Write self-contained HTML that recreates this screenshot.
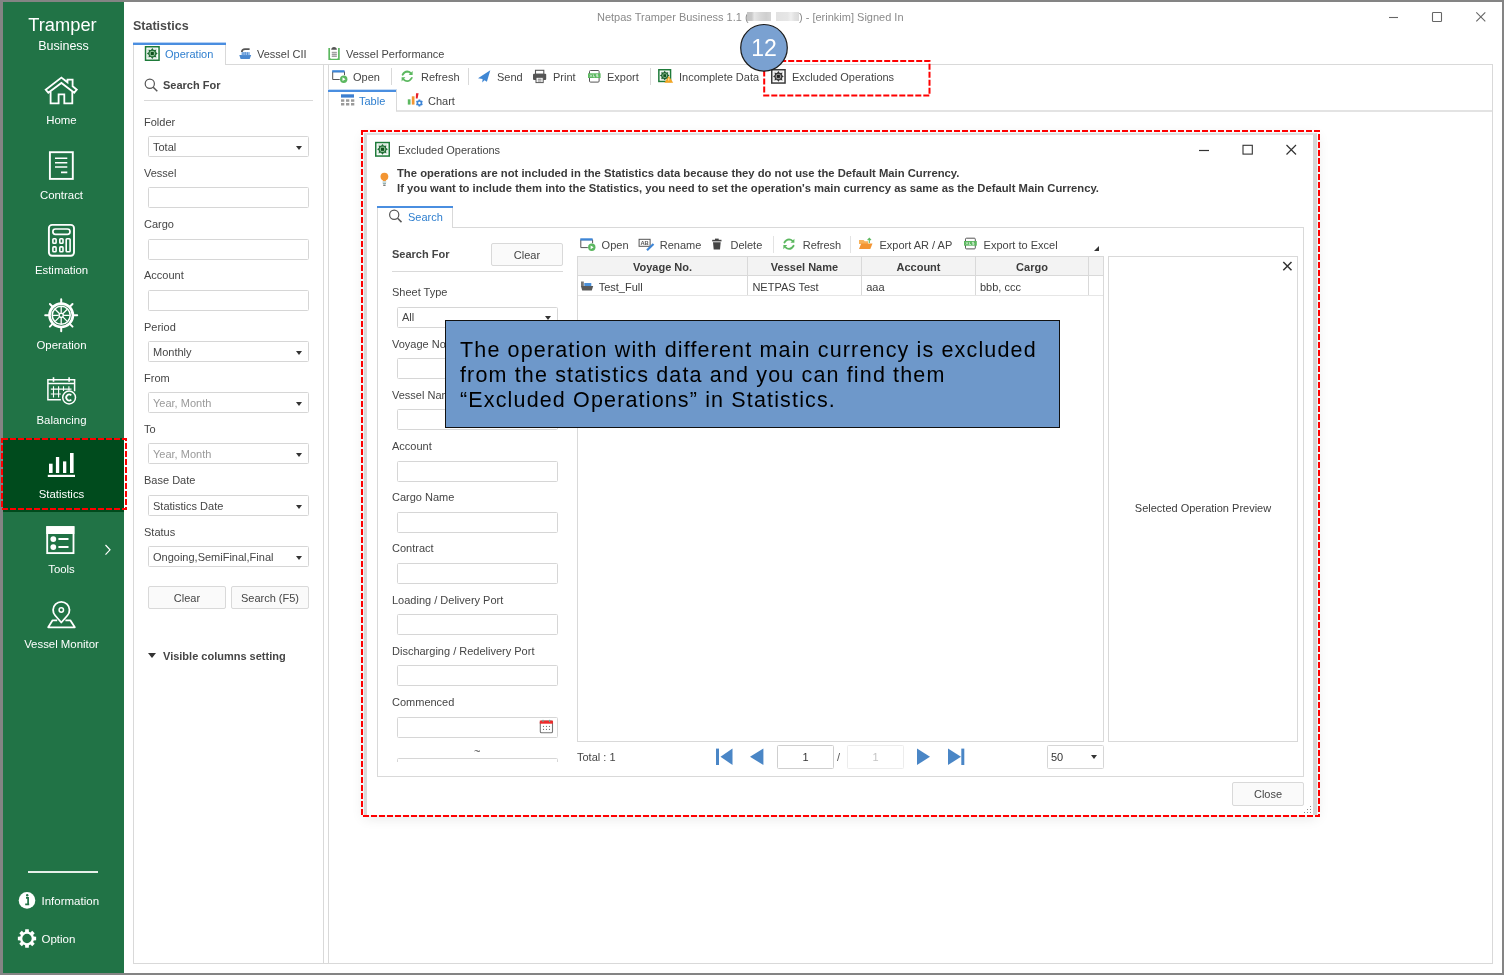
<!DOCTYPE html>
<html><head><meta charset="utf-8"><style>
*{margin:0;padding:0;box-sizing:border-box}
html,body{width:1504px;height:975px;overflow:hidden;background:#848484;font-family:"Liberation Sans",sans-serif;position:relative}
.a{position:absolute}
.t{position:absolute;white-space:nowrap;font-size:11px;line-height:14px;color:#454545}
.b{font-weight:bold}
.box{position:absolute;border:1px solid #d6d6d6;background:#fff;border-radius:1.5px}
.sb{position:absolute;color:#fff;font-size:11.4px;line-height:14px;white-space:nowrap;text-align:center;width:121px;left:1px}
.hl{position:absolute;height:1px;background:#d9d9d9}
.vl{position:absolute;width:1px;background:#d9d9d9}
svg{position:absolute;overflow:visible}
.tri{position:absolute;width:0;height:0;border-left:3.5px solid transparent;border-right:3.5px solid transparent;border-top:4px solid #333}
.btn{position:absolute;border:1px solid #d9d9d9;border-radius:2px;background:#fafafa;font-size:11px;color:#454545;text-align:center;white-space:nowrap;display:flex;align-items:center;justify-content:center}
</style></head><body><div style="position:absolute;left:0;top:0;width:1504px;height:975px;will-change:transform">
<!-- white app -->
<div class="a" style="left:3px;top:2px;width:1499px;height:971px;background:#fff"></div>

<!-- SIDEBAR -->
<div class="a" style="left:3px;top:2px;width:121px;height:971px;background:#217346"></div>
<div class="sb" style="left:2px;top:13.5px;font-size:18.3px;line-height:22px">Tramper</div>
<div class="sb" style="left:3px;top:37.5px;font-size:12.5px;line-height:16px">Business</div>
<div class="sb" style="top:113px">Home</div>
<div class="sb" style="top:188px">Contract</div>
<div class="sb" style="top:263px">Estimation</div>
<div class="sb" style="top:338px">Operation</div>
<div class="sb" style="top:413px">Balancing</div>
<div class="a" style="left:3px;top:438px;width:121px;height:74px;background:#004b1d"></div>
<div class="sb" style="top:487px">Statistics</div>
<div class="sb" style="top:562px">Tools</div>
<div class="sb" style="top:637px">Vessel Monitor</div>
<div class="a" style="left:28px;top:871px;width:70px;height:1.5px;background:#e6efe9"></div>
<svg width="130" height="975" style="left:0;top:0" fill="none" stroke="#fff" stroke-width="1.8">
<!-- home -->
<path d="M45.7,89.7 L61.4,77.6 L67.5,82.3 L67.5,79.6 L72.6,79.6 L72.6,86.3 L76.8,89.7 L74.2,92.8 L61.4,83 L48.3,92.8 Z" stroke-linejoin="miter"/>
<path d="M50.6,91.5 V103.4 H58.6 V94.3 H64.3 V103.4 H72.3 V91.5"/>
<!-- contract -->
<rect x="49.9" y="152.2" width="22.9" height="26.7" stroke-width="1.9"/>
<path d="M55,158.2 H67.3 M55,162.8 H67.3 M55,167 H67.3 M61,172.4 H67.3" stroke-width="1.6"/>
<!-- estimation -->
<rect x="48.9" y="224.9" width="25.1" height="30.9" rx="3.2" stroke-width="1.9"/>
<rect x="52.9" y="229" width="17.1" height="5.3" rx="2.5" stroke-width="1.7"/>
<rect x="52.9" y="238.7" width="3.2" height="4.6" rx="0.8" stroke-width="1.6"/>
<rect x="59.8" y="238.7" width="3.2" height="4.6" rx="0.8" stroke-width="1.6"/>
<rect x="52.9" y="246.9" width="3.2" height="4.9" rx="0.8" stroke-width="1.6"/>
<rect x="59.8" y="246.9" width="3.2" height="4.9" rx="0.8" stroke-width="1.6"/>
<rect x="66.2" y="238.7" width="3.9" height="13.1" rx="0.8" stroke-width="1.6"/>
<!-- operation wheel -->
<circle cx="61.2" cy="315.3" r="11.7" stroke-width="2.6"/>
<circle cx="61.2" cy="315.3" r="9" stroke-width="1.5"/>
<circle cx="61.2" cy="315.3" r="2.1" stroke-width="1.4"/>
<path d="M61.20,312.70 L61.20,306.70 M63.04,313.46 L67.28,309.22 M63.80,315.30 L69.80,315.30 M63.04,317.14 L67.28,321.38 M61.20,317.90 L61.20,323.90 M59.36,317.14 L55.12,321.38 M58.60,315.30 L52.60,315.30 M59.36,313.46 L55.12,309.22" stroke-width="1.3"/>
<path d="M61.20,303 L61.20,299.3 M70.04,306.46 L72.51,303.99 M73.50,315.30 L77.20,315.30 M70.04,324.14 L72.51,326.61 M61.20,327.6 L61.20,331.30 M52.36,324.14 L49.89,326.61 M48.90,315.30 L45.20,315.30 M52.36,306.46 L49.89,303.99" stroke-width="2" stroke-linecap="round"/>
<!-- balancing -->
<path d="M74.6,391.3 V379.8 H47.9 V399.8 H60.9 M47.9,383.5 H74.6" stroke-width="1.5"/>
<path d="M53.5,377.2 V381.7 M69.1,377.2 V381.7" stroke-width="1.6"/>
<path d="M53.5,386.2 V397.5 M58.6,386.2 V397.5 M63.5,386.2 V391 M68.9,386.2 V390 M50.8,389.1 H71.5 M50.8,394 H60.9" stroke-width="1.1"/>
<circle cx="69.1" cy="397.5" r="6.4" stroke-width="1.5"/>
<path d="M71.3,395.3 A3,3 0 1 0 71.3,399.7" stroke-width="1.8"/>
<!-- statistics -->
<g fill="#fff" stroke="none">
<rect x="49" y="463.7" width="3.6" height="9.3"/>
<rect x="55.9" y="457" width="3.3" height="16"/>
<rect x="63" y="461.4" width="3.3" height="11.6"/>
<rect x="70" y="453" width="3.6" height="20"/>
<rect x="47.8" y="474.8" width="27.2" height="2.2"/>
</g>
<!-- tools -->
<rect x="47.2" y="527.1" width="26.3" height="26" stroke-width="1.85"/>
<rect x="46.3" y="526.2" width="28.1" height="7.8" fill="#fff" stroke="none"/>
<circle cx="53.3" cy="539.1" r="2.9" fill="#fff" stroke="none"/>
<circle cx="53.3" cy="547.1" r="2.9" fill="#fff" stroke="none"/>
<path d="M58.4,539.1 H68.5 M58.4,547.1 H68.5" stroke-width="2"/>
<path d="M105.5,545 L110,549.8 L105.5,554.6" stroke-width="1.2"/>
<!-- vessel monitor -->
<path d="M61.3,622.5 L55.2,615.5 A8.2,8.2 0 1 1 67.4,615.5 Z" stroke-width="1.8" stroke-linejoin="round"/>
<circle cx="61.3" cy="610" r="2.2" stroke-width="1.5"/>
<path d="M57.2,620.3 H52.6 L48.2,627.3 H74.8 L70.3,620.3 H65.4" stroke-width="1.8" stroke-linejoin="round"/>
<!-- info -->
<circle cx="27" cy="900.4" r="8.3" fill="#fff" stroke="none"/>
<path d="M26,897.8 H28.1 V904.3 M25.2,904.4 H29.2" stroke="#217346" stroke-width="1.7"/>
<circle cx="27.2" cy="895.3" r="1.2" fill="#217346" stroke="none"/>
<!-- option gear -->
<path fill="#fff" stroke="none" fill-rule="evenodd" d="M25.07,931.77 L25.23,929.37 L28.77,929.37 L28.93,931.77 L30.39,932.38 L32.20,930.79 L34.71,933.30 L33.12,935.11 L33.73,936.57 L36.13,936.73 L36.13,940.27 L33.73,940.43 L33.12,941.89 L34.71,943.70 L32.20,946.21 L30.39,944.62 L28.93,945.23 L28.77,947.63 L25.23,947.63 L25.07,945.23 L23.61,944.62 L21.80,946.21 L19.29,943.70 L20.88,941.89 L20.27,940.43 L17.87,940.27 L17.87,936.73 L20.27,936.57 L20.88,935.11 L19.29,933.30 L21.80,930.79 L23.61,932.38 Z M27,933.8 A4.7,4.7 0 1 0 27,943.2 A4.7,4.7 0 1 0 27,933.8 Z"/>
</svg>
<div class="t" style="left:41.5px;top:894px;color:#fff;font-size:11.5px">Information</div>
<div class="t" style="left:41.5px;top:932px;color:#fff;font-size:11.5px">Option</div>

<!-- TITLE -->
<div class="t" style="left:597px;top:10px;color:#8a8a8a">Netpas Tramper Business 1.1 (</div>
<div class="a" style="left:747px;top:12px;width:24px;height:9px;background:linear-gradient(90deg,#c4c4c4 0,#c9c9c9 20%,#e6e6e6 30%,#d8d8d8 55%,#cfcfcf 80%,#d6d6d6 100%)"></div>
<div class="a" style="left:776px;top:12px;width:23px;height:9px;background:linear-gradient(90deg,#e2e2e2 0,#e6e6e6 50%,#efefef 65%,#e2e2e2 80%,#dadada 100%)"></div>
<div class="t" style="left:799px;top:10px;color:#8a8a8a">) - [erinkim] Signed In</div>
<svg width="1" height="1" style="left:0;top:0" fill="none" stroke="#666" stroke-width="1.1">
<path d="M1389,17.5 H1398"/>
<rect x="1432.5" y="12.5" width="9" height="9" rx="0.8"/>
<path d="M1476.3,12.3 L1485.3,21.3 M1485.3,12.3 L1476.3,21.3" stroke-width="1.1"/>
</svg>
<div class="t b" style="left:133px;top:18px;font-size:12.5px;line-height:16px;color:#4a4a4a">Statistics</div>

<!-- MAIN TABS -->
<div class="hl" style="left:225px;top:64px;width:1268px"></div>
<div class="a" style="left:133px;top:42px;width:93px;height:23px;border:1px solid #d9d9d9;border-top:none;border-bottom:none;background:#fff"></div>
<div class="a" style="left:133px;top:42px;width:93px;height:3px;background:linear-gradient(#b5d0f3 0,#b5d0f3 1px,#4a8ee0 1px)"></div>
<div class="t" style="left:165px;top:47px;color:#2f7fcf">Operation</div>
<div class="t" style="left:257px;top:47px">Vessel CII</div>
<div class="t" style="left:346px;top:47px">Vessel Performance</div>

<!-- LEFT PANEL -->
<div class="vl" style="left:133px;top:64px;height:900px"></div>
<div class="vl" style="left:323px;top:64px;height:900px"></div>
<div class="hl" style="left:133px;top:963px;width:1360px"></div>
<div class="t b" style="left:163px;top:78px">Search For</div>
<div class="hl" style="left:144px;top:100px;width:169px"></div>

<!-- RIGHT PANEL -->
<div class="vl" style="left:328px;top:64px;height:900px"></div>
<div class="vl" style="left:1492px;top:64px;height:900px"></div>
<div class="hl" style="left:328px;top:963px;width:1165px"></div>
<div class="hl" style="left:396px;top:110px;width:1096px;height:2px;background:#e3e3e3"></div>
<div class="a" style="left:328px;top:89px;width:69px;height:3px;background:linear-gradient(#c5dbf5 0,#c5dbf5 1px,#4a8ee0 1px)"></div>
<div class="vl" style="left:396px;top:90px;height:21px"></div>
<div class="t" style="left:359px;top:94px;color:#2f7fcf">Table</div>
<div class="t" style="left:428px;top:94px">Chart</div>

<div class="t" style="left:353px;top:70px">Open</div>
<div class="t" style="left:421px;top:70px">Refresh</div>
<div class="t" style="left:497px;top:70px">Send</div>
<div class="t" style="left:553px;top:70px">Print</div>
<div class="t" style="left:607px;top:70px">Export</div>
<div class="t" style="left:679px;top:70px">Incomplete Data</div>
<div class="t" style="left:792px;top:70px">Excluded Operations</div>
<div class="vl" style="left:391px;top:68px;height:17px"></div>
<div class="vl" style="left:468px;top:68px;height:17px"></div>
<div class="vl" style="left:650px;top:68px;height:17px"></div>

<div class="t" style="left:144px;top:114.5px">Folder</div>
<div class="box" style="left:148px;top:136px;width:161px;height:21px"></div>
<div class="t" style="left:153px;top:140px">Total</div>
<div class="tri" style="left:296px;top:146px"></div>
<div class="t" style="left:144px;top:165.8px">Vessel</div>
<div class="box" style="left:148px;top:187px;width:161px;height:21px"></div>
<div class="t" style="left:144px;top:217.0px">Cargo</div>
<div class="box" style="left:148px;top:239px;width:161px;height:21px"></div>
<div class="t" style="left:144px;top:268.2px">Account</div>
<div class="box" style="left:148px;top:290px;width:161px;height:21px"></div>
<div class="t" style="left:144px;top:319.5px">Period</div>
<div class="box" style="left:148px;top:341px;width:161px;height:21px"></div>
<div class="t" style="left:153px;top:345px">Monthly</div>
<div class="tri" style="left:296px;top:351px"></div>
<div class="t" style="left:144px;top:370.8px">From</div>
<div class="box" style="left:148px;top:392px;width:161px;height:21px"></div>
<div class="t" style="left:153px;top:396px;color:#9a9a9a">Year, Month</div>
<div class="tri" style="left:296px;top:402px"></div>
<div class="t" style="left:144px;top:422.0px">To</div>
<div class="box" style="left:148px;top:443px;width:161px;height:21px"></div>
<div class="t" style="left:153px;top:447px;color:#9a9a9a">Year, Month</div>
<div class="tri" style="left:296px;top:453px"></div>
<div class="t" style="left:144px;top:473.2px">Base Date</div>
<div class="box" style="left:148px;top:495px;width:161px;height:21px"></div>
<div class="t" style="left:153px;top:499px">Statistics Date</div>
<div class="tri" style="left:296px;top:505px"></div>
<div class="t" style="left:144px;top:524.5px">Status</div>
<div class="box" style="left:148px;top:546px;width:161px;height:21px"></div>
<div class="t" style="left:153px;top:550px">Ongoing,SemiFinal,Final</div>
<div class="tri" style="left:296px;top:556px"></div>
<div class="btn" style="left:148px;top:586px;width:78px;height:23px">Clear</div>
<div class="btn" style="left:231px;top:586px;width:78px;height:23px">Search (F5)</div>
<div class="a" style="left:148px;top:653px;width:0;height:0;border-left:4px solid transparent;border-right:4px solid transparent;border-top:5px solid #333"></div>
<div class="t b" style="left:163px;top:649px">Visible columns setting</div>
<!--LEFTFORM-->
<!-- dialog frame -->
<div class="a" style="left:364px;top:133px;width:953px;height:682px;background:#fff;border-left:3px solid #dadada;border-right:4px solid #d6d6d6;border-top:2px solid #e0e0e0;box-shadow:0 3px 12px rgba(0,0,0,0.10)"></div>
<div class="t" style="left:398px;top:143px;color:#454545">Excluded Operations</div>
<svg width="1" height="1" style="left:0;top:0" fill="none" stroke="#333" stroke-width="1.2">
<path d="M1199,150.5 H1209"/>
<rect x="1243" y="145.3" width="9.3" height="8.8" stroke-width="1.1"/>
<path d="M1286.5,145 L1296,154.5 M1296,145 L1286.5,154.5" stroke-width="1.2"/>
</svg>
<div class="t b" style="left:397px;top:166px;color:#3a3a3a;font-size:11.25px">The operations are not included in the Statistics data because they do not use the Default Main Currency.</div>
<div class="t b" style="left:397px;top:181px;color:#3a3a3a;font-size:11.25px">If you want to include them into the Statistics, you need to set the operation's main currency as same as the Default Main Currency.</div>
<div class="a" style="left:377px;top:227px;width:927px;height:550px;border:1px solid #d9d9d9;background:#fff"></div>
<div class="a" style="left:377px;top:206px;width:76px;height:22px;border:1px solid #d9d9d9;border-bottom:none;background:#fff"></div>
<div class="a" style="left:377px;top:206px;width:76px;height:2px;background:#4a8ee0"></div>
<div class="t" style="left:408px;top:210px;color:#2f7fcf">Search</div>
<div class="t b" style="left:392px;top:247px">Search For</div>
<div class="btn" style="left:491px;top:243px;width:72px;height:23px">Clear</div>
<div class="hl" style="left:392px;top:271px;width:171px"></div>
<div class="a" style="left:378px;top:272px;width:198px;height:490px;overflow:hidden">
<div class="t" style="left:14px;top:13.4px">Sheet Type</div>
<div class="box" style="left:19px;top:35px;width:161px;height:21px"></div>
<div class="t" style="left:24px;top:38px">All</div>
<div class="tri" style="left:167px;top:44px"></div>
<div class="t" style="left:14px;top:64.6px">Voyage No.</div>
<div class="box" style="left:19px;top:86px;width:161px;height:21px"></div>
<div class="t" style="left:14px;top:115.8px">Vessel Name</div>
<div class="box" style="left:19px;top:137px;width:161px;height:21px"></div>
<div class="t" style="left:14px;top:167.0px">Account</div>
<div class="box" style="left:19px;top:189px;width:161px;height:21px"></div>
<div class="t" style="left:14px;top:218.2px">Cargo Name</div>
<div class="box" style="left:19px;top:240px;width:161px;height:21px"></div>
<div class="t" style="left:14px;top:269.4px">Contract</div>
<div class="box" style="left:19px;top:291px;width:161px;height:21px"></div>
<div class="t" style="left:14px;top:320.6px">Loading / Delivery Port</div>
<div class="box" style="left:19px;top:342px;width:161px;height:21px"></div>
<div class="t" style="left:14px;top:371.8px">Discharging / Redelivery Port</div>
<div class="box" style="left:19px;top:393px;width:161px;height:21px"></div>
<div class="t" style="left:14px;top:423.0px">Commenced</div>
<div class="box" style="left:19px;top:445px;width:161px;height:21px"></div>
<div class="t" style="left:96px;top:472px;font-size:11px">~</div>
<div class="box" style="left:19px;top:486px;width:161px;height:21px"></div>
</div>
<div class="t" style="left:601.6px;top:238px">Open</div>
<div class="t" style="left:659.8px;top:238px">Rename</div>
<div class="t" style="left:730.5px;top:238px">Delete</div>
<div class="t" style="left:802.7px;top:238px">Refresh</div>
<div class="t" style="left:879.5px;top:238px">Export AR / AP</div>
<div class="t" style="left:983.6px;top:238px">Export to Excel</div>
<div class="vl" style="left:773px;top:236px;height:17px;background:#e3e3e3"></div>
<div class="vl" style="left:850px;top:236px;height:17px;background:#e3e3e3"></div>
<div class="a" style="left:1094px;top:246px;width:0;height:0;border-left:5px solid transparent;border-bottom:5px solid #333"></div>
<div class="a" style="left:577px;top:256px;width:527px;height:486px;border:1px solid #d9d9d9;background:#fff"></div>
<div class="a" style="left:578px;top:257px;width:525px;height:19px;background:#f3f3f3;border-bottom:1px solid #d9d9d9"></div>
<div class="vl" style="left:747px;top:257px;height:38px"></div>
<div class="vl" style="left:861px;top:257px;height:38px"></div>
<div class="vl" style="left:975px;top:257px;height:38px"></div>
<div class="vl" style="left:1088px;top:257px;height:38px"></div>
<div class="hl" style="left:578px;top:295px;width:525px;background:#e6e6e6"></div>
<div class="t b" style="left:578px;width:169px;text-align:center;top:260px;color:#3c3c3c">Voyage No.</div>
<div class="t b" style="left:748px;width:113px;text-align:center;top:260px;color:#3c3c3c">Vessel Name</div>
<div class="t b" style="left:862px;width:113px;text-align:center;top:260px;color:#3c3c3c">Account</div>
<div class="t b" style="left:976px;width:112px;text-align:center;top:260px;color:#3c3c3c">Cargo</div>
<div class="t" style="left:598.7px;top:280px;color:#3c3c3c">Test_Full</div>
<div class="t" style="left:752.4px;top:280px;color:#3c3c3c">NETPAS Test</div>
<div class="t" style="left:866.2px;top:280px;color:#3c3c3c">aaa</div>
<div class="t" style="left:980px;top:280px;color:#3c3c3c">bbb, ccc</div>
<div class="a" style="left:1108px;top:256px;width:190px;height:486px;border:1px solid #d9d9d9;background:#fff"></div>
<svg width="1" height="1" style="left:0;top:0" fill="none" stroke="#333" stroke-width="1.5"><path d="M1283.3,262 L1291.5,270.2 M1291.5,262 L1283.3,270.2"/></svg>
<div class="t" style="left:1108px;width:190px;text-align:center;top:501px;color:#3c3c3c">Selected Operation Preview</div>
<div class="t" style="left:577px;top:750px;color:#454545">Total : 1</div>
<svg width="1" height="1" style="left:0;top:0" fill="#4a86c6" stroke="none">
<rect x="716" y="748.6" width="3" height="16.4"/><path d="M732.5,748.6 V765 L720.5,756.8 Z"/>
<path d="M763.4,748.6 V765 L750,756.8 Z"/>
<path d="M917,748.6 V765 L930,756.8 Z"/>
<path d="M948,748.6 V765 L961,756.8 Z"/><rect x="961.3" y="748.6" width="3" height="16.4"/>
</svg>
<div class="box" style="left:777px;top:745px;width:57px;height:24px;border-color:#cfcfcf"></div>
<div class="t" style="left:777px;width:57px;text-align:center;top:750px;color:#333">1</div>
<div class="t" style="left:837px;top:750px;color:#555">/</div>
<div class="box" style="left:847px;top:745px;width:57px;height:24px;border-color:#ececec"></div>
<div class="t" style="left:847px;width:57px;text-align:center;top:750px;color:#c4c4c4">1</div>
<div class="box" style="left:1047px;top:745px;width:57px;height:24px"></div>
<div class="t" style="left:1051px;top:750px;color:#333">50</div>
<div class="tri" style="left:1091px;top:755px"></div>
<div class="btn" style="left:1232px;top:782px;width:72px;height:24px">Close</div>
<!--DIALOG-->
<!--ICONS-->
<svg width="1504" height="975" style="left:0;top:0" fill="none">
<rect x="145.55" y="46.75" width="13.5" height="13.5" stroke="#1e7b3a" stroke-width="1.5" fill="#fff"/>
<rect x="147.8" y="49" width="9" height="9" stroke="#1e7b3a" stroke-width="0.5" opacity="0.35"/>
<path d="M152.30,48.10 L153.75,50.01 L156.12,49.68 L155.79,52.05 L157.70,53.50 L155.79,54.95 L156.12,57.32 L153.75,56.99 L152.30,58.90 L150.85,56.99 L148.48,57.32 L148.81,54.95 L146.90,53.50 L148.81,52.05 L148.48,49.68 L150.85,50.01 Z" fill="#1e6b33"/>
<circle cx="152.3" cy="53.5" r="2.808" fill="#8fbf95"/>
<rect x="150.8" y="52.0" width="3.0" height="3.0" fill="#0d4f1c"/>
<rect x="375.75" y="142.55" width="13.5" height="13.5" stroke="#1e7b3a" stroke-width="1.5" fill="#fff"/>
<rect x="378" y="144.8" width="9" height="9" stroke="#1e7b3a" stroke-width="0.5" opacity="0.35"/>
<path d="M382.50,143.90 L383.95,145.81 L386.32,145.48 L385.99,147.85 L387.90,149.30 L385.99,150.75 L386.32,153.12 L383.95,152.79 L382.50,154.70 L381.05,152.79 L378.68,153.12 L379.01,150.75 L377.10,149.30 L379.01,147.85 L378.68,145.48 L381.05,145.81 Z" fill="#1e6b33"/>
<circle cx="382.5" cy="149.3" r="2.808" fill="#8fbf95"/>
<rect x="381.0" y="147.8" width="3.0" height="3.0" fill="#0d4f1c"/>
<rect x="771.75" y="69.75" width="13.3" height="13.3" stroke="#3a3a3a" stroke-width="1.5" fill="#fff"/>
<rect x="774" y="72" width="8.8" height="8.8" stroke="#3a3a3a" stroke-width="0.5" opacity="0.35"/>
<path d="M778.40,71.07 L779.83,72.95 L782.17,72.63 L781.85,74.97 L783.73,76.40 L781.85,77.83 L782.17,80.17 L779.83,79.85 L778.40,81.73 L776.97,79.85 L774.63,80.17 L774.95,77.83 L773.07,76.40 L774.95,74.97 L774.63,72.63 L776.97,72.95 Z" fill="#333"/>
<circle cx="778.4" cy="76.4" r="2.77056" fill="#9a9a9a"/>
<rect x="776.92" y="74.92" width="2.9600000000000004" height="2.9600000000000004" fill="#222"/>
<rect x="658.85" y="69.75" width="11.7" height="11.7" stroke="#1e7b3a" stroke-width="1.5" fill="#fff"/>
<rect x="661.1" y="72" width="7.199999999999999" height="7.199999999999999" stroke="#1e7b3a" stroke-width="0.5" opacity="0.35"/>
<path d="M664.70,70.85 L665.97,72.53 L668.06,72.24 L667.77,74.33 L669.45,75.60 L667.77,76.87 L668.06,78.96 L665.97,78.67 L664.70,80.35 L663.43,78.67 L661.34,78.96 L661.63,76.87 L659.95,75.60 L661.63,74.33 L661.34,72.24 L663.43,72.53 Z" fill="#1a5e2c"/>
<circle cx="664.7" cy="75.6" r="2.47104" fill="#8fbf95"/>
<rect x="663.38" y="74.28" width="2.64" height="2.64" fill="#0d4f1c"/>
<path d="M668.8,76 L673.2,82.8 H664.4 Z" fill="#f5a623"/>
<path d="M668.8,78.3 V80.6" stroke="#fff" stroke-width="0.8"/>
<path d="M239.3,55.1 H251.2 L249.7,59 H240.6 Z" fill="#4a88d0"/>
<rect x="241.4" y="52.1" width="8.6" height="3" fill="#9cc0ea"/>
<path d="M243,52.3 V55 M245.2,52 V55 M247.6,52.3 V55" stroke="#4a88d0" stroke-width="0.9"/>
<path d="M241.8,52 Q242,49.3 245,49.2 H249.6" stroke="#555" stroke-width="1.7"/>
<path d="M329.2,48 V59.1 H338.9 V48" stroke="#5cb860" stroke-width="1.7"/>
<rect x="330.7" y="48.5" width="6.7" height="10.2" fill="#fff"/>
<path d="M331.2,49.8 Q331.5,47 334,47 Q336.6,47 336.9,49.8 Z" fill="#555"/>
<rect x="331.8" y="51.8" width="5" height="5.2" fill="#cfcfcf"/>
<path d="M331.8,52.4 H336.8 M331.8,54.5 H336.8 M331.8,56.4 H336.8" stroke="#8f8f8f" stroke-width="0.8"/>
<circle cx="149.8" cy="83.8" r="4.6" stroke="#555" stroke-width="1.2"/><path d="M153.2,87.2 L157.3,91.2" stroke="#555" stroke-width="1.5"/>
<circle cx="394.2" cy="214.8" r="4.6" stroke="#555" stroke-width="1.2"/><path d="M397.6,218.2 L401.5,222.1" stroke="#555" stroke-width="1.5"/>
<path d="M344.5,75.2 V71.7 H332.7 V79.5 H339.7" stroke="#555" stroke-width="1"/>
<rect x="332.2" y="70.2" width="12.3" height="2.2" fill="#3d85d6"/>
<circle cx="343.7" cy="79.2" r="3.7" fill="#5cb860"/>
<path d="M342.5,77.3 L345.5,79.2 L342.5,81.10000000000001 Z" fill="#fff"/>
<path d="M592.5999999999999,243.3 V239.8 H580.8 V247.60000000000002 H587.8" stroke="#555" stroke-width="1"/>
<rect x="580.3" y="238.3" width="12.3" height="2.2" fill="#3d85d6"/>
<circle cx="591.8" cy="247.3" r="3.7" fill="#5cb860"/>
<path d="M590.5999999999999,245.4 L593.5999999999999,247.3 L590.5999999999999,249.20000000000002 Z" fill="#fff"/>
<path d="M402.59999999999997,74.7 Q404.4,71.5 407.2,71.5 Q409.2,71.6 410.59999999999997,73.0" stroke="#5cb860" stroke-width="1.8" stroke-linecap="round"/>
<path d="M412.59999999999997,71.0 V75.0 H408.7 Z" fill="#5cb860"/>
<path d="M411.8,77.89999999999999 Q410.0,81.1 407.2,81.1 Q405.2,81.0 403.8,79.6" stroke="#5cb860" stroke-width="1.8" stroke-linecap="round"/>
<path d="M401.59999999999997,81.5 V77.3 H405.4 Z" fill="#5cb860"/>
<path d="M784.4,242.5 Q786.2,239.29999999999998 789,239.29999999999998 Q791,239.4 792.4,240.79999999999998" stroke="#5cb860" stroke-width="1.8" stroke-linecap="round"/>
<path d="M794.4,238.79999999999998 V242.79999999999998 H790.5 Z" fill="#5cb860"/>
<path d="M793.6,245.7 Q791.8,248.9 789,248.9 Q787,248.79999999999998 785.6,247.4" stroke="#5cb860" stroke-width="1.8" stroke-linecap="round"/>
<path d="M783.4,249.29999999999998 V245.1 H787.2 Z" fill="#5cb860"/>
<path d="M490.3,70.2 L478,78.3 L482.6,79 L482.2,82.5 L484.5,80.3 L486.9,81.7 Z" fill="#3f87d4"/>
<rect x="535.5" y="70.3" width="8.3" height="4" stroke="#555" stroke-width="1.1" fill="#fff"/>
<rect x="533" y="73.8" width="13.2" height="6.2" rx="1" fill="#555"/>
<rect x="536" y="77.3" width="7.2" height="5.3" stroke="#555" stroke-width="1" fill="#fff"/>
<path d="M537.8,79.2 H541.5 M537.8,81 H541.5" stroke="#555" stroke-width="0.8"/>
<rect x="589.5" y="70.5" width="9.6" height="11.6" rx="1" stroke="#555" stroke-width="1" fill="#fff"/>
<rect x="588" y="73.3" width="12.6" height="4.7" fill="#5cb860"/>
<path d="M590,74.5 L592,76.8 M592,74.5 L590,76.8 M593.5,74.5 V76.8 H595 M598,74.6 H596.3 V75.6 H598 V76.7 H596.3" stroke="#fff" stroke-width="0.6"/>
<rect x="965.5" y="238.2" width="9.8" height="10.7" rx="1" stroke="#555" stroke-width="1" fill="#fff"/>
<rect x="964" y="241.0" width="12.8" height="4.7" fill="#5cb860"/>
<path d="M966,242.2 L968,244.5 M968,242.2 L966,244.5 M969.5,242.2 V244.5 H971 M974,242.29999999999998 H972.3 V243.29999999999998 H974 V244.39999999999998 H972.3" stroke="#fff" stroke-width="0.6"/>
<rect x="341" y="94.3" width="13" height="3.3" fill="#3d7fd0"/>
<rect x="341" y="99.3" width="3.3" height="2.5" fill="#9a9a9a"/>
<rect x="346" y="99.3" width="3.3" height="2.5" fill="#9a9a9a"/>
<rect x="351" y="99.3" width="3.3" height="2.5" fill="#9a9a9a"/>
<rect x="341" y="103" width="3.3" height="2.5" fill="#9a9a9a"/>
<rect x="346" y="103" width="3.3" height="2.5" fill="#9a9a9a"/>
<rect x="351" y="103" width="3.3" height="2.5" fill="#9a9a9a"/>
<rect x="407.8" y="99.3" width="2.7" height="5.3" fill="#5cb860"/>
<rect x="411.8" y="96.3" width="2.7" height="8.3" fill="#f39532"/>
<path d="M416,93.3 H418.6 L417.6,98.6 H415.8 Z" fill="#e8202a"/>
<path d="M418.39,100.50 L418.47,99.52 L420.33,99.52 L420.41,100.50 L421.06,100.87 L421.95,100.45 L422.88,102.07 L422.07,102.62 L422.07,103.38 L422.88,103.93 L421.95,105.55 L421.06,105.13 L420.41,105.50 L420.33,106.48 L418.47,106.48 L418.39,105.50 L417.74,105.13 L416.85,105.55 L415.92,103.93 L416.73,103.38 L416.73,102.62 L415.92,102.07 L416.85,100.45 L417.74,100.87 Z M418.20,103.00 A1.2,1.2 0 1 0 420.60,103.00 A1.2,1.2 0 1 0 418.20,103.00 Z" fill="#3d85d6" fill-rule="evenodd"/>
<circle cx="384.4" cy="176.6" r="3.9" fill="#f39532"/>
<path d="M382.3,178 L383,181 H385.8 L386.5,178 Z" fill="#f39532"/>
<path d="M382.6,182 H386.2 M382.8,183.5 H386" stroke="#8aa" stroke-width="0.9"/><path d="M383.2,185.2 H385.6" stroke="#444" stroke-width="1"/>
<rect x="639.1" y="239.3" width="11" height="7" stroke="#555" stroke-width="1" fill="#fff"/>
<text x="644.6" y="245.4" font-size="5.8" font-weight="bold" text-anchor="middle" fill="#555" font-family="Liberation Sans">AB</text>
<path d="M653.5,244 L647,250.3" stroke="#3d85d6" stroke-width="2.2"/>
<rect x="712.2" y="239.8" width="9.3" height="1.6" fill="#444"/><rect x="715" y="238.6" width="3.7" height="1.4" fill="#444"/>
<path d="M713,242.2 H720.7 L720,249.4 H713.7 Z" fill="#444"/>
<path d="M859,240 H863.5 L864.8,241.3 H868 V244 H859 Z" fill="#f7b25a"/>
<path d="M859,248.9 L861.2,243.6 H872.5 L870.3,248.9 Z" fill="#f39532"/>
<path d="M869.3,243 V238.6 M867.6,240.2 L869.3,238.3 L871,240.2" stroke="#5cb860" stroke-width="1.1"/>
<path d="M580.9,286 H593.2 L591.8,290.6 H582.2 Z" fill="#5a5a5a"/>
<rect x="581" y="281.5" width="2.8" height="4.5" fill="#777"/>
<rect x="584.3" y="283" width="7" height="3" fill="#4a8fd8"/>
<rect x="540.3" y="721" width="12.2" height="11.8" rx="1.3" stroke="#777" stroke-width="1.1" fill="#fff"/>
<rect x="539.8" y="720.6" width="13.1" height="3.1" fill="#ed2b2b"/>
<path d="M543,719.8 V722 M549.6,719.8 V722" stroke="#6a9" stroke-width="1"/>
<circle cx="543.5" cy="726.4" r="0.6" fill="#777"/>
<circle cx="546.5" cy="726.4" r="0.6" fill="#777"/>
<circle cx="549.5" cy="726.4" r="0.6" fill="#777"/>
<circle cx="543.5" cy="729.4" r="0.6" fill="#777"/>
<circle cx="546.5" cy="729.4" r="0.6" fill="#777"/>
<circle cx="549.5" cy="729.4" r="0.6" fill="#777"/>
<rect x="1310" y="806" width="1" height="1" fill="#888"/>
<rect x="1310" y="809" width="1" height="1" fill="#888"/>
<rect x="1307" y="809" width="1" height="1" fill="#888"/>
<rect x="1310" y="812" width="1" height="1" fill="#888"/>
<rect x="1307" y="812" width="1" height="1" fill="#888"/>
<rect x="1304" y="812" width="1" height="1" fill="#888"/>
</svg>
<!--/ICONS-->
<svg width="1504" height="975" style="left:0;top:0" fill="none">
<rect x="2" y="439" width="124" height="70" stroke="#f00" stroke-width="2" stroke-dasharray="6 2"/>
<rect x="764.2" y="61" width="165.3" height="34.5" stroke="#f00" stroke-width="2" stroke-dasharray="6 2"/>
<rect x="362" y="131" width="957" height="685" stroke="#f00" stroke-width="2" stroke-dasharray="6 2"/>
<circle cx="764" cy="47.8" r="23.3" fill="#7aa1d1" stroke="#1c1c1c" stroke-width="1.2"/>
</svg>
<div class="a" style="left:740px;top:35px;width:48px;text-align:center;font-size:23px;line-height:27px;color:#fff">12</div>
<div class="a" style="left:445px;top:320px;width:615px;height:108px;background:#6e98ca;border:1px solid #111"></div>
<div class="a" style="left:460px;top:338px;font-size:21.5px;line-height:25.1px;letter-spacing:1.15px;color:#000;white-space:nowrap">The operation with different main currency is excluded<br>from the statistics data and you can find them<br>“Excluded Operations” in Statistics.</div>
<!--OVERLAY-->
</div></body></html>
